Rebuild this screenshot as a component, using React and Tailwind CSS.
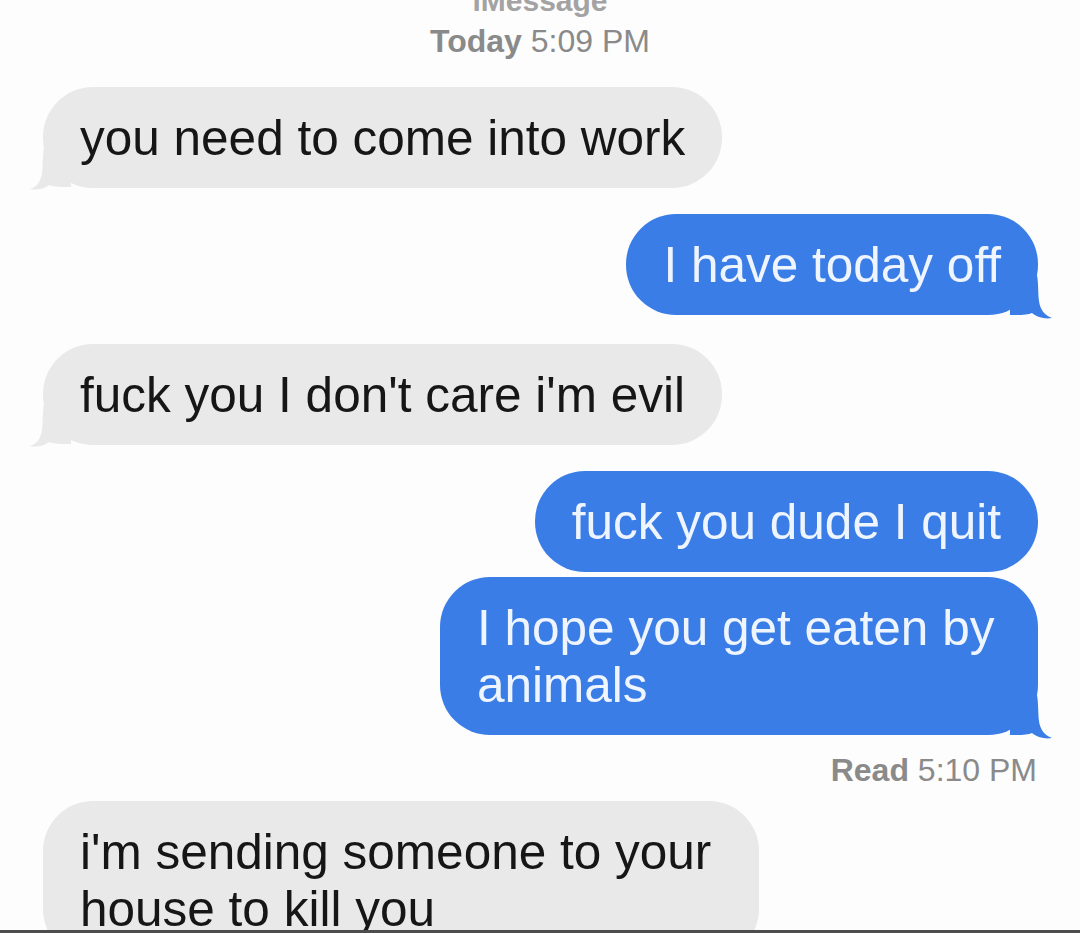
const sans = "font-['Liberation_Sans',Arial,sans-serif]";

const messages = [
  { from: 'them', text: 'you need to come into work', tail: true, gap: 'mt-[28px]' },
  { from: 'me', text: 'I have today off', tail: true, gap: 'mt-[26px]' },
  { from: 'them', text: "fuck you I don't care i'm evil", tail: true, gap: 'mt-[29px]' },
  { from: 'me', text: 'fuck you dude I quit', tail: false, gap: 'mt-[26px]' },
  { from: 'me', text: 'I hope you get eaten by animals', tail: true, gap: 'mt-[5px]', max: 'max-w-[598px]' },
];

// curled tail at the bubble's bottom corner
function Tail({ side, color }) {
  if (side === 'right') {
    return (
      <svg className="absolute right-[-16px] bottom-[-4px]" width="44" height="44" viewBox="0 0 44 44">
        <path d="M0 0 L27 0 C28.5 8 28 20 29 26 C30 34 34 40 42 43 C35 44.5 27 42 22 38 Q16 40.5 0 40 Z" fill={color} />
      </svg>
    );
  }
  return (
    <svg className="absolute left-[-16px] bottom-[-3px]" width="44" height="44" viewBox="0 0 44 44">
      <path d="M44 0 L17 0 C15.5 8 16 20 15 26 C14 34 10 40 3 42 C9 43.5 17 42 22 38 Q28 40.5 44 40 Z" fill={color} />
    </svg>
  );
}

function Bubble({ from, text, tail, gap, max }) {
  const mine = from === 'me';
  const color = mine ? '#3b7de7' : '#e9e9ea';
  return (
    <div className={`flex ${mine ? 'justify-end pr-[42px]' : 'justify-start pl-[43px]'} ${gap}`}>
      <div
        className={`relative rounded-[50px] px-[37px] py-[22px] text-[49.5px] leading-[57px] ${max || ''} ${
          mine ? 'bg-[#3b7de7] text-[#eef5ff]' : 'bg-[#e9e9ea] text-[#161616]'
        }`}
      >
        {tail && <Tail side={mine ? 'right' : 'left'} color={color} />}
        <span className="relative">{text}</span>
      </div>
    </div>
  );
}

export default function App() {
  return (
    <div className={`h-[933px] w-[1080px] overflow-hidden bg-[#fdfdfd] flex flex-col ${sans}`}>
      <div className="flex-1 overflow-hidden">
        {/* header */}
        <div className="flex flex-col items-center mt-[-16px]">
          <div className="text-[30px] leading-[34px] font-semibold text-[#a3a3a3]">iMessage</div>
          <div className="mt-[5px] text-[32px] leading-[36px] text-[#8a8a8a]">
            <span className="font-semibold">Today</span> 5:09 PM
          </div>
        </div>

        {messages.map((m, i) => (
          <Bubble key={i} {...m} />
        ))}

        <div className="mt-[17px] pr-[43px] text-right text-[32px] leading-[36px] text-[#8a8a8a]">
          <span className="font-semibold">Read</span> 5:10 PM
        </div>

        <Bubble
          from="them"
          text="i'm sending someone to your house to kill you"
          tail={false}
          gap="mt-[13px]"
          max="max-w-[716px]"
        />
      </div>
      <div className="h-[3px] bg-[#4d4d4d]" />
    </div>
  );
}
